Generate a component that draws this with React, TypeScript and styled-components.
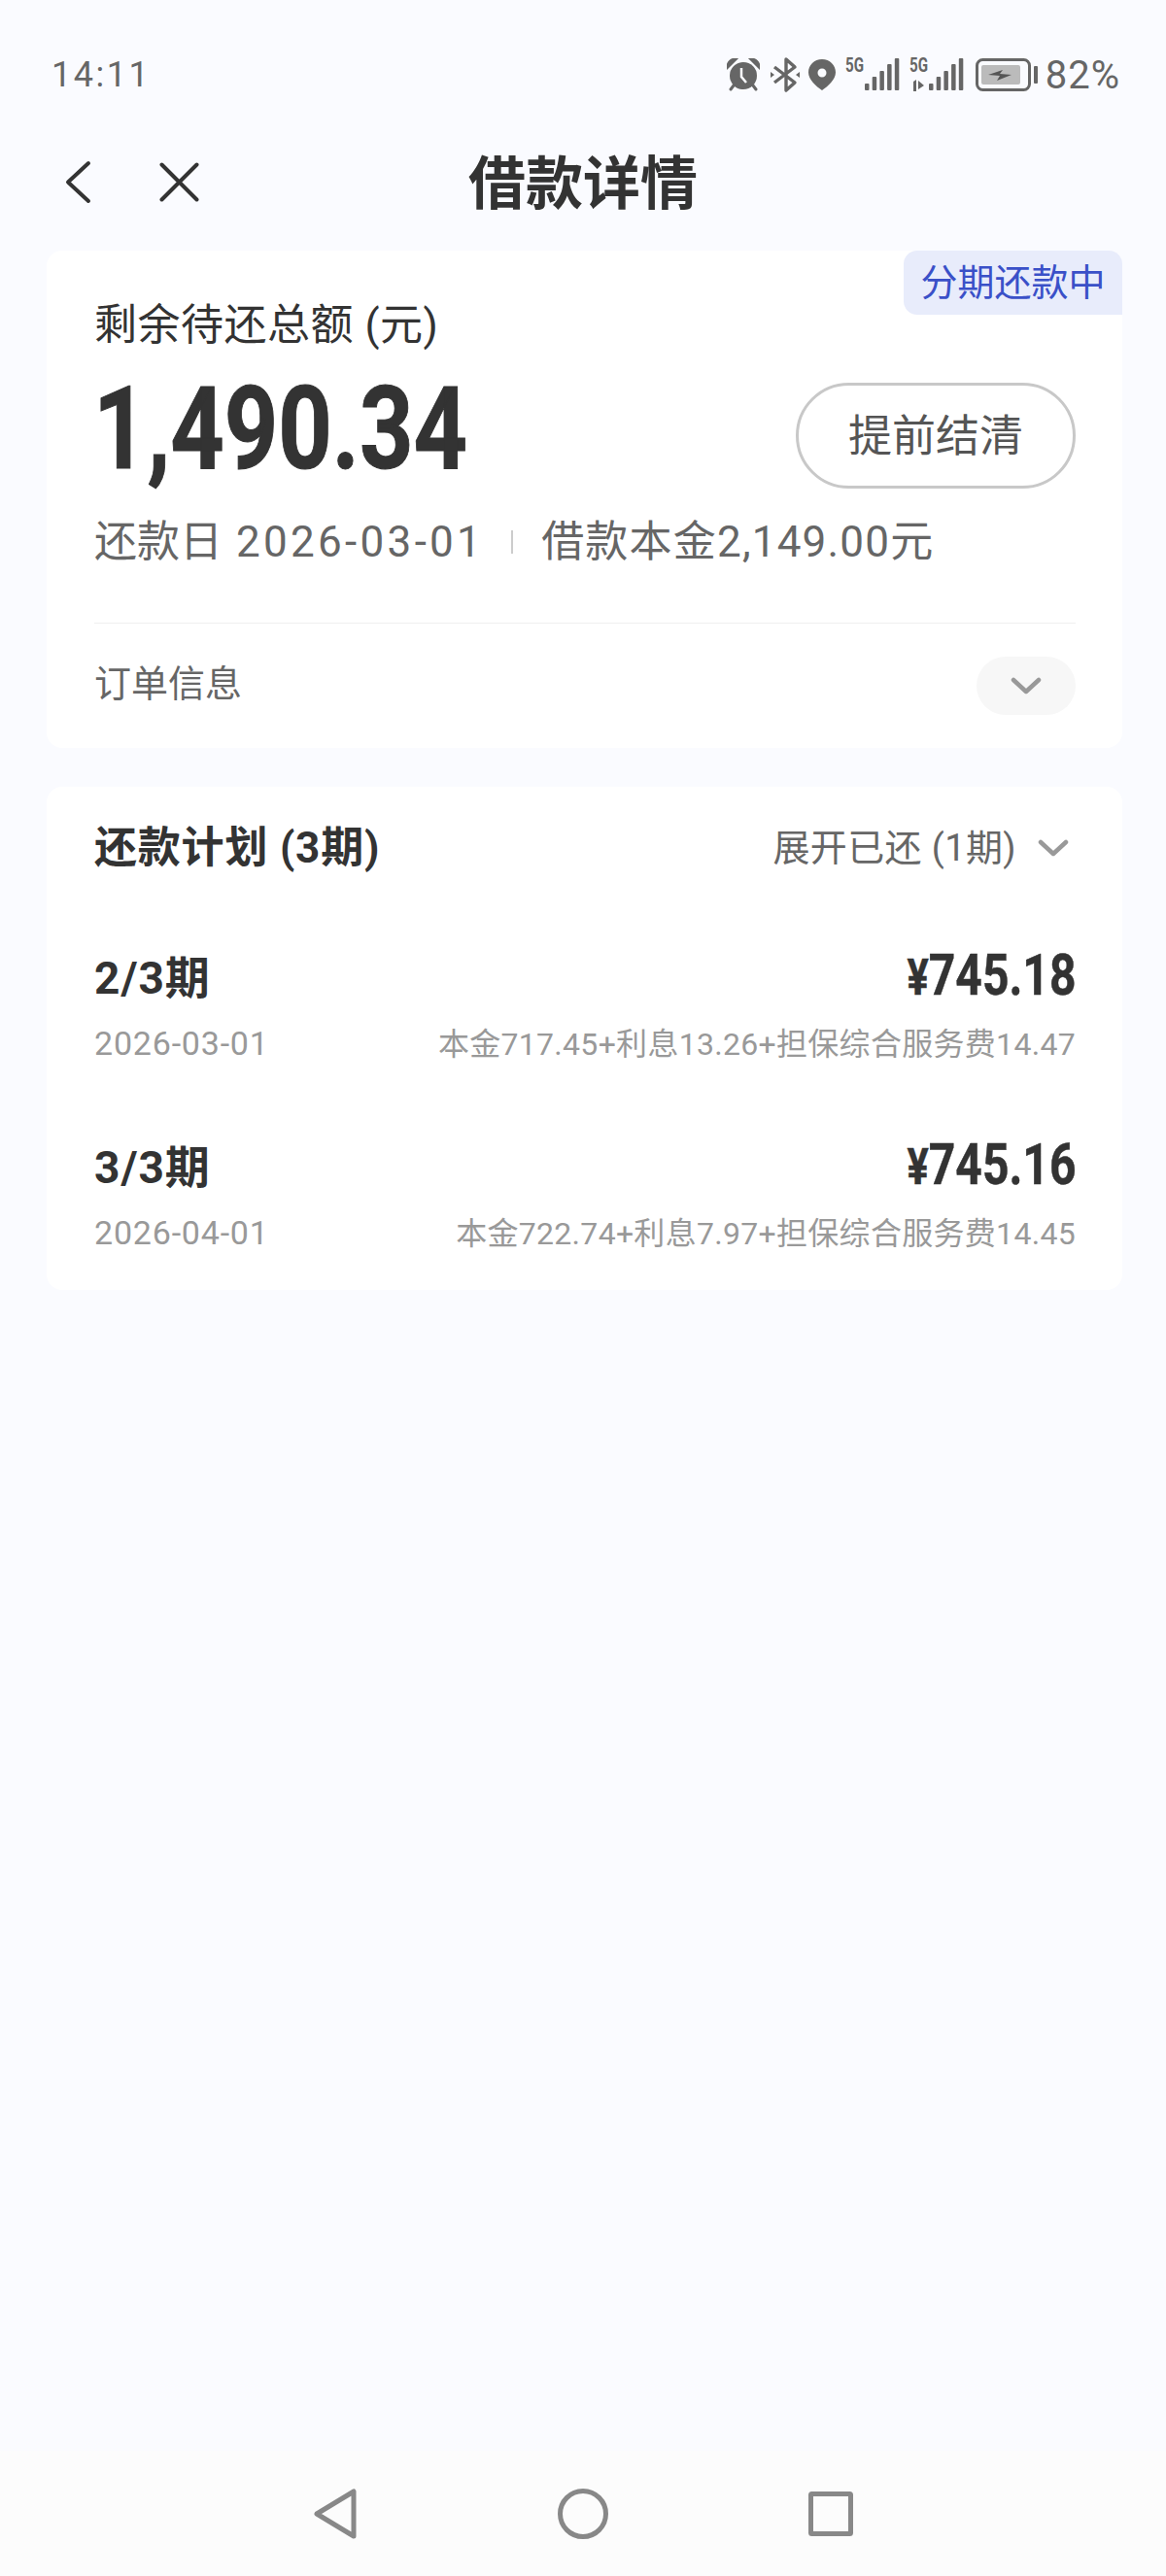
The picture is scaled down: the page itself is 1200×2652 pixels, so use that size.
import styled, { createGlobalStyle } from 'styled-components';

const GlobalStyle = createGlobalStyle`
    * {
        box-sizing: border-box;
    }
    body {
        margin: 0;
        background: #fafbff;
        font-family: Roboto, "Noto Sans CJK SC", sans-serif;
    }
`;

const Page = styled.div`
    width: 1200px;
    height: 2652px;
    display: flex;
    flex-direction: column;
    background: #fafbff;
    overflow: hidden;
`;

const StatusBar = styled.div`
    height: 124px;
    padding: 30px 47px 0 53px;
    display: flex;
    align-items: center;
    justify-content: space-between;
    color: #666;
`;

const Clock = styled.span`
    font-size: 36px;
    letter-spacing: 2.5px;
`;

const StatusIcons = styled.div`
    display: flex;
    align-items: center;
`;

const Battery = styled.span`
    margin-left: 8px;
    font-size: 40px;
    letter-spacing: 1px;
`;

const Header = styled.header`
    height: 126px;
    padding: 0 0 0 67px;
    position: relative;
    display: flex;
    align-items: center;
    gap: 70px;
`;

const Title = styled.h1`
    position: absolute;
    left: 0;
    right: 0;
    margin: 0;
    padding-bottom: 6px;
    text-align: center;
    font-size: 59px;
    font-weight: 700;
    color: #333;
`;

const Main = styled.main`
    flex: 1;
    padding: 8px 45px 0 48px;
    display: flex;
    flex-direction: column;
    gap: 40px;
`;

const Card = styled.section`
    position: relative;
    background: #fff;
    border-radius: 16px;
    padding: 0 48px 0 49px;
`;

const StatusTag = styled.div`
    position: absolute;
    top: 0;
    right: 0;
    width: 225px;
    height: 66px;
    padding-bottom: 7px;
    display: flex;
    align-items: center;
    justify-content: center;
    background: #e8ecfb;
    border-radius: 14px 14px 0 14px;
    color: #3a50c8;
    font-size: 38px;
`;

const BalanceLabel = styled.div`
    padding-top: 49px;
    font-size: 44px;
    line-height: 56px;
    letter-spacing: 0.5px;
    color: #333;
`;

const BalanceRow = styled.div`
    margin-top: 25px;
    height: 120px;
    display: flex;
    align-items: center;
    justify-content: space-between;
`;

const BalanceAmount = styled.div`
    margin-left: -1px;
    padding-bottom: 12px;
    font-size: 118px;
    line-height: 120px;
    font-weight: 700;
    color: #333;
    -webkit-text-stroke: 1px #333;
    transform: scaleX(0.82);
    transform-origin: left center;
`;

const SettleButton = styled.button`
    width: 288px;
    height: 109px;
    padding: 0 0 5px;
    border: 3px solid #c8c8c8;
    border-radius: 55px;
    background: #fff;
    font-family: inherit;
    font-size: 45px;
    color: #555;
`;

const MetaRow = styled.div`
    margin-top: 22px;
    display: flex;
    align-items: center;
    font-size: 44px;
    line-height: 56px;
    color: #666;
`;

const DueDate = styled.span`
    margin-left: 14px;
    letter-spacing: 3.3px;
`;

const Principal = styled.span`
    letter-spacing: 1.2px;
`;

const MetaSeparator = styled.i`
    width: 2px;
    height: 24px;
    margin: 0 29px 0 28px;
    background: #ccc;
`;

const Divider = styled.div`
    margin-top: 55px;
    height: 1px;
    background: #f0f0f0;
`;

const OrderRow = styled.div`
    height: 128px;
    padding-top: 34px;
    display: flex;
    align-items: flex-start;
    justify-content: space-between;
`;

const OrderLabel = styled.span`
    margin-top: 2px;
    font-size: 38px;
    line-height: 52px;
    color: #666;
`;

const ExpandPill = styled.span`
    width: 102px;
    height: 60px;
    display: flex;
    align-items: center;
    justify-content: center;
    background: #f7f7f7;
    border-radius: 30px;
`;

const PlanCard = styled(Card)`
    padding-top: 35px;
    padding-bottom: 29px;
`;

const PlanHeader = styled.div`
    display: flex;
    align-items: center;
    justify-content: space-between;
    line-height: 56px;
`;

const PlanTitle = styled.span`
    font-size: 44px;
    font-weight: 700;
    letter-spacing: 0.8px;
    color: #333;
`;

const PlanToggle = styled.span`
    display: flex;
    align-items: center;
    gap: 22px;
    padding-right: 7px;
    font-size: 38px;
    letter-spacing: 0.4px;
    color: #666;
`;

const PlanList = styled.div`
    margin-top: 75px;
    display: flex;
    flex-direction: column;
    gap: 67px;
`;

const PlanLine = styled.div`
    height: 60px;
    display: flex;
    align-items: center;
    justify-content: space-between;
`;

const PlanRow = styled.div`
    display: flex;
    flex-direction: column;
    gap: 8px;
`;

const Period = styled.span`
    padding-bottom: 6px;
    font-size: 46px;
    font-weight: 700;
    letter-spacing: 1px;
    color: #333;
`;

const PlanAmount = styled.span`
    padding-bottom: 6px;
    font-size: 60px;
    font-weight: 700;
    color: #333;
    -webkit-text-stroke: 0.5px #333;
    transform: scaleX(0.8);
    transform-origin: right center;
`;

const Currency = styled.small`
    font-size: 52px;
`;

const PlanDate = styled.span`
    font-size: 34px;
    letter-spacing: 0.8px;
    color: #999;
`;

const PlanDetail = styled.span`
    padding-bottom: 5px;
    font-size: 32px;
    letter-spacing: 0.3px;
    color: #999;
`;

const NavBar = styled.nav`
    height: 129px;
    padding: 0 322px 0 323px;
    display: flex;
    align-items: center;
    justify-content: space-between;
    background: #fcfcfc;
`;

const plan = [
    {
        period: '2/3期',
        amount: '745.18',
        date: '2026-03-01',
        detail: '本金717.45+利息13.26+担保综合服务费14.47',
    },
    {
        period: '3/3期',
        amount: '745.16',
        date: '2026-04-01',
        detail: '本金722.74+利息7.97+担保综合服务费14.45',
    },
];

function Chevron({ color = '#999' }: { color?: string }) {
    return (
        <svg width="32" height="18" viewBox="0 0 32 18" fill="none">
            <path d="M3 3l13 12L29 3" stroke={color} strokeWidth="4.5" strokeLinecap="round" strokeLinejoin="round" />
        </svg>
    );
}

function AlarmIcon() {
    return (
        <svg width="34" height="34" viewBox="0 0 34 34" fill="#666">
            <circle cx="17" cy="18" r="14" />
            <path d="M1 9c0-5 4-8 8-8zM33 9c0-5-4-8-8-8z" stroke="#666" strokeWidth="3" />
            <path d="M7 28l-3 4M27 28l3 4" stroke="#666" strokeWidth="3" strokeLinecap="round" />
            <path d="M15 10v9l5 6" stroke="#fafbff" strokeWidth="2.5" fill="none" />
        </svg>
    );
}

function BluetoothIcon() {
    return (
        <svg width="32" height="38" viewBox="0 0 32 38" fill="none" style={{ marginLeft: 10 }}>
            <path d="M5 11l21 16-9 8V3l9 8L5 27" stroke="#666" strokeWidth="3.4" strokeLinejoin="round" />
            <path d="M1 16l4 3-4 3zM31 16l-4 3 4 3z" fill="#666" />
        </svg>
    );
}

function PinIcon() {
    return (
        <svg width="28" height="32" viewBox="0 0 28 32" style={{ marginLeft: 8 }}>
            <path fillRule="evenodd" fill="#666" d="M14 0c8 0 14 6 14 13.500C28 21 20 28 14 32 8 28 0 21 0 13.500 0 6 6 0 14 0zm0 9.500a4.500 4.500 0 1 0 0 9 4.500 4.500 0 0 0 0-9z" />
        </svg>
    );
}

function SignalIcon({ arrows = false }: { arrows?: boolean }) {
    const bars = [7, 14, 20, 27, 33];
    return (
        <svg width="56" height="36" viewBox="0 0 56 36" fill="#666" overflow="visible" style={{ marginLeft: 10 }}>
            <text x="0" y="15" fontSize="20" fontWeight="700" fontFamily="Roboto" textLength="19" lengthAdjust="spacingAndGlyphs">5G</text>
            {arrows && <path d="M4 25l3-2v12H4zM9 24l6 5-6 4z" />}
            {bars.map((h, i) => (
                <rect key={i} x={20 + i * 7.7} y={34 - h} width="4.5" height={h} rx="1" />
            ))}
        </svg>
    );
}

function BatteryIcon() {
    return (
        <svg width="64" height="34" viewBox="0 0 64 34" fill="none" style={{ marginLeft: 12 }}>
            <rect x="1.500" y="1.500" width="54" height="31" rx="6" stroke="#666" strokeWidth="3" />
            <rect x="6" y="7" width="40" height="20" rx="2" fill="#bbb" />
            <path d="M13 17l15-5-3 4 12 1-15 6 3-5z" fill="#555" />
            <rect x="60" y="8" width="4" height="18" rx="1" fill="#666" />
        </svg>
    );
}

function App() {
    return (
        <Page>
            <GlobalStyle />
            <StatusBar>
                <Clock>14:11</Clock>
                <StatusIcons>
                    <AlarmIcon />
                    <BluetoothIcon />
                    <PinIcon />
                    <SignalIcon />
                    <SignalIcon arrows />
                    <BatteryIcon />
                    <Battery>82%</Battery>
                </StatusIcons>
            </StatusBar>
            <Header>
                <svg width="27" height="45" viewBox="0 0 27 45" fill="none">
                    <path d="M24 3L3 22.500 24 42" stroke="#333" strokeWidth="4" strokeLinecap="round" strokeLinejoin="round" />
                </svg>
                <svg width="41" height="41" viewBox="0 0 41 41" fill="none">
                    <path d="M2.500 2.500l36 36M38.500 2.500l-36 36" stroke="#333" strokeWidth="4" strokeLinecap="round" />
                </svg>
                <Title>借款详情</Title>
            </Header>
            <Main>
                <Card>
                    <StatusTag>分期还款中</StatusTag>
                    <BalanceLabel>剩余待还总额 (元)</BalanceLabel>
                    <BalanceRow>
                        <BalanceAmount>1,490.34</BalanceAmount>
                        <SettleButton>提前结清</SettleButton>
                    </BalanceRow>
                    <MetaRow>
                        <span>还款日</span>
                        <DueDate>2026-03-01</DueDate>
                        <MetaSeparator />
                        <Principal>借款本金2,149.00元</Principal>
                    </MetaRow>
                    <Divider />
                    <OrderRow>
                        <OrderLabel>订单信息</OrderLabel>
                        <ExpandPill><Chevron /></ExpandPill>
                    </OrderRow>
                </Card>
                <PlanCard>
                    <PlanHeader>
                        <PlanTitle>还款计划 (3期)</PlanTitle>
                        <PlanToggle>展开已还 (1期)<Chevron /></PlanToggle>
                    </PlanHeader>
                    <PlanList>
                        {plan.map((item) => (
                            <PlanRow key={item.period}>
                                <PlanLine>
                                    <Period>{item.period}</Period>
                                    <PlanAmount><Currency>¥</Currency>{item.amount}</PlanAmount>
                                </PlanLine>
                                <PlanLine>
                                    <PlanDate>{item.date}</PlanDate>
                                    <PlanDetail>{item.detail}</PlanDetail>
                                </PlanLine>
                            </PlanRow>
                        ))}
                    </PlanList>
                </PlanCard>
            </Main>
            <NavBar>
                <svg width="44" height="52" viewBox="0 0 44 52" fill="none">
                    <path d="M41 3v46L3 26z" stroke="#888" strokeWidth="5" strokeLinejoin="round" />
                </svg>
                <svg width="52" height="52" viewBox="0 0 52 52" fill="none">
                    <circle cx="26" cy="26" r="23.500" stroke="#888" strokeWidth="5" />
                </svg>
                <svg width="46" height="46" viewBox="0 0 46 46" fill="none">
                    <rect x="2.500" y="2.500" width="41" height="41" rx="1" stroke="#888" strokeWidth="5" />
                </svg>
            </NavBar>
        </Page>
    );
}

export default App;
